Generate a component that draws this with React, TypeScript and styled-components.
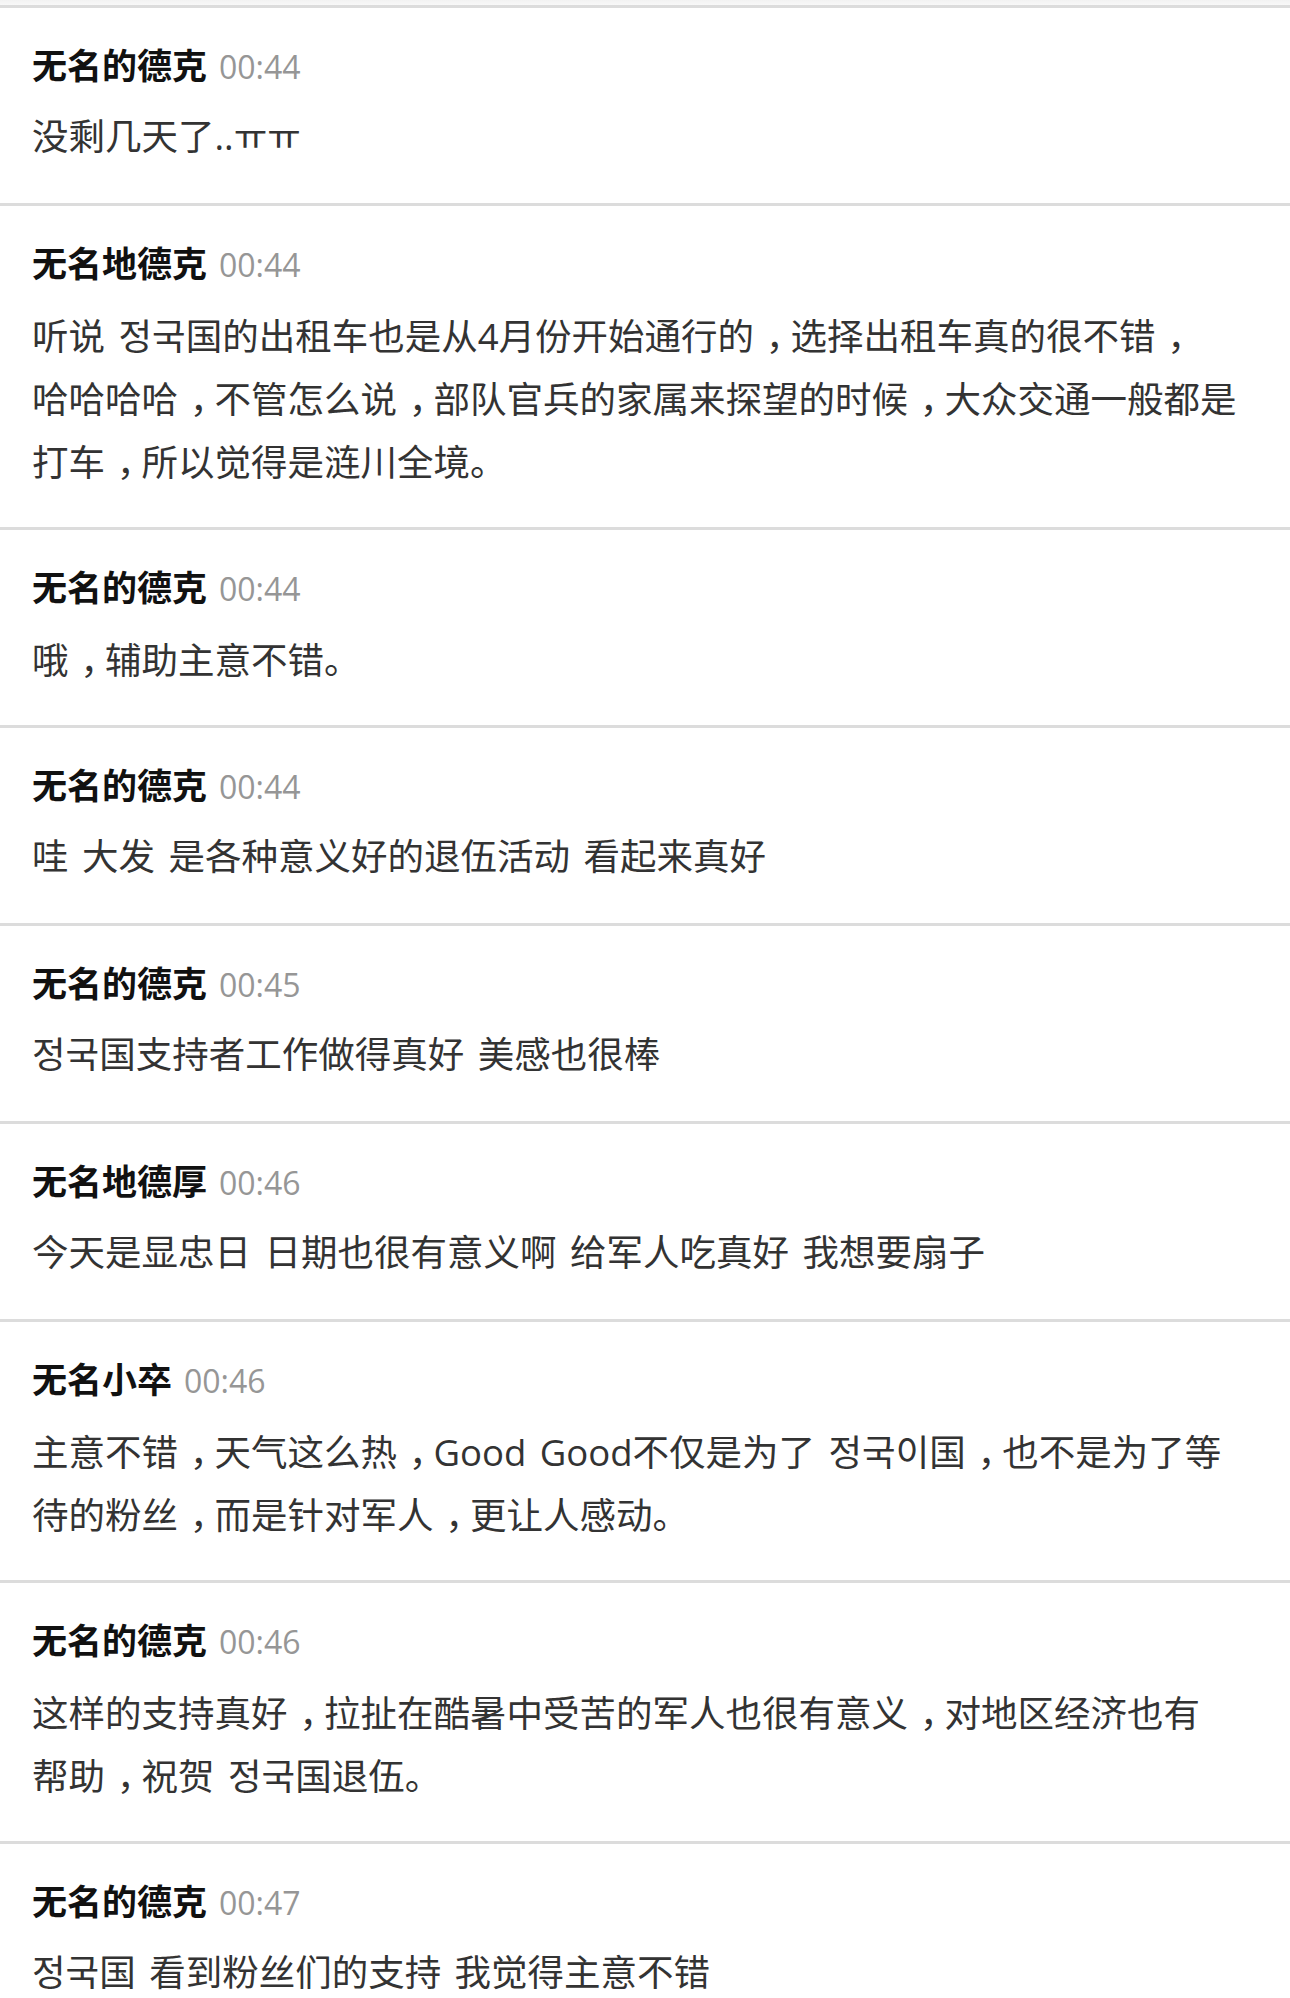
import React from "react";
import styled, { createGlobalStyle } from "styled-components";

const GlobalStyle = createGlobalStyle`
  html, body {
    margin: 0;
    padding: 0;
    background: #ffffff;
  }
  body {
    font-family: "Open Sans", "Noto Sans CJK SC", "Noto Sans CJK KR", sans-serif;
    -webkit-font-smoothing: antialiased;
  }
`;

const Page = styled.div`
  width: 1290px;
  min-height: 1998px;
  background: #ffffff;
  overflow: hidden;
`;

const TopStrip = styled.div`
  height: 5px;
  background: linear-gradient(#f2f2f2, #f8f8f8);
  border-bottom: 3px solid #dcdcdc;
`;

const List = styled.ul`
  list-style: none;
  margin: 0;
  padding: 0;
`;

const Item = styled.li`
  padding: 31px 32px 35px;
  border-bottom: 3px solid #dcdcdc;
`;

const Header = styled.div`
  display: flex;
  align-items: baseline;
  gap: 12px;
  height: 50px;
  line-height: 50px;
`;

const Name = styled.span`
  font-family: "Noto Sans CJK SC", sans-serif;
  font-weight: 700;
  font-size: 35px;
  color: #111111;
`;

const Time = styled.span`
  font-family: "Open Sans", sans-serif;
  font-size: 32px;
  color: #969696;
`;

const Body = styled.div`
  margin-top: 16px;
  font-family: "Open Sans", "Noto Sans CJK SC", "Noto Sans CJK KR", sans-serif;
  font-size: 36.5px;
  line-height: 63px;
  word-spacing: 4px;
  color: #333333;
`;

const Line = styled.div`
  height: 63px;
  line-height: 63px;
  white-space: nowrap;
`;

const Comma = styled.span`
  font-family: "Noto Sans CJK SC", sans-serif;
  padding-left: 0.32em;
  letter-spacing: -0.32em;
`;

type Comment = { name: string; time: string; lines: string[] };

const comments: Comment[] = [
  { name: "无名的德克", time: "00:44", lines: ["没剩几天了..ㅠㅠ"] },
  {
    name: "无名地德克",
    time: "00:44",
    lines: [
      "听说 정국国的出租车也是从4月份开始通行的，选择出租车真的很不错，",
      "哈哈哈哈，不管怎么说，部队官兵的家属来探望的时候，大众交通一般都是",
      "打车，所以觉得是涟川全境。",
    ],
  },
  { name: "无名的德克", time: "00:44", lines: ["哦，辅助主意不错。"] },
  { name: "无名的德克", time: "00:44", lines: ["哇 大发 是各种意义好的退伍活动 看起来真好"] },
  { name: "无名的德克", time: "00:45", lines: ["정국国支持者工作做得真好 美感也很棒"] },
  { name: "无名地德厚", time: "00:46", lines: ["今天是显忠日 日期也很有意义啊 给军人吃真好 我想要扇子"] },
  {
    name: "无名小卒",
    time: "00:46",
    lines: [
      "主意不错，天气这么热，Good Good不仅是为了 정국이国，也不是为了等",
      "待的粉丝，而是针对军人，更让人感动。",
    ],
  },
  {
    name: "无名的德克",
    time: "00:46",
    lines: [
      "这样的支持真好，拉扯在酷暑中受苦的军人也很有意义，对地区经济也有",
      "帮助，祝贺 정국国退伍。",
    ],
  },
  { name: "无名的德克", time: "00:47", lines: ["정국国 看到粉丝们的支持 我觉得主意不错"] },
];

function renderLine(text: string) {
  const parts = text.split("，");
  return parts.map((p, i) => (
    <React.Fragment key={i}>
      {p}
      {i < parts.length - 1 && <Comma>，</Comma>}
    </React.Fragment>
  ));
}

export default function App() {
  return (
    <Page>
      <GlobalStyle />
      <TopStrip />
      <List>
        {comments.map((c, i) => (
          <Item key={i}>
            <Header>
              <Name>{c.name}</Name>
              <Time>{c.time}</Time>
            </Header>
            <Body>
              {c.lines.map((l, j) => (
                <Line key={j}>{renderLine(l)}</Line>
              ))}
            </Body>
          </Item>
        ))}
      </List>
    </Page>
  );
}
